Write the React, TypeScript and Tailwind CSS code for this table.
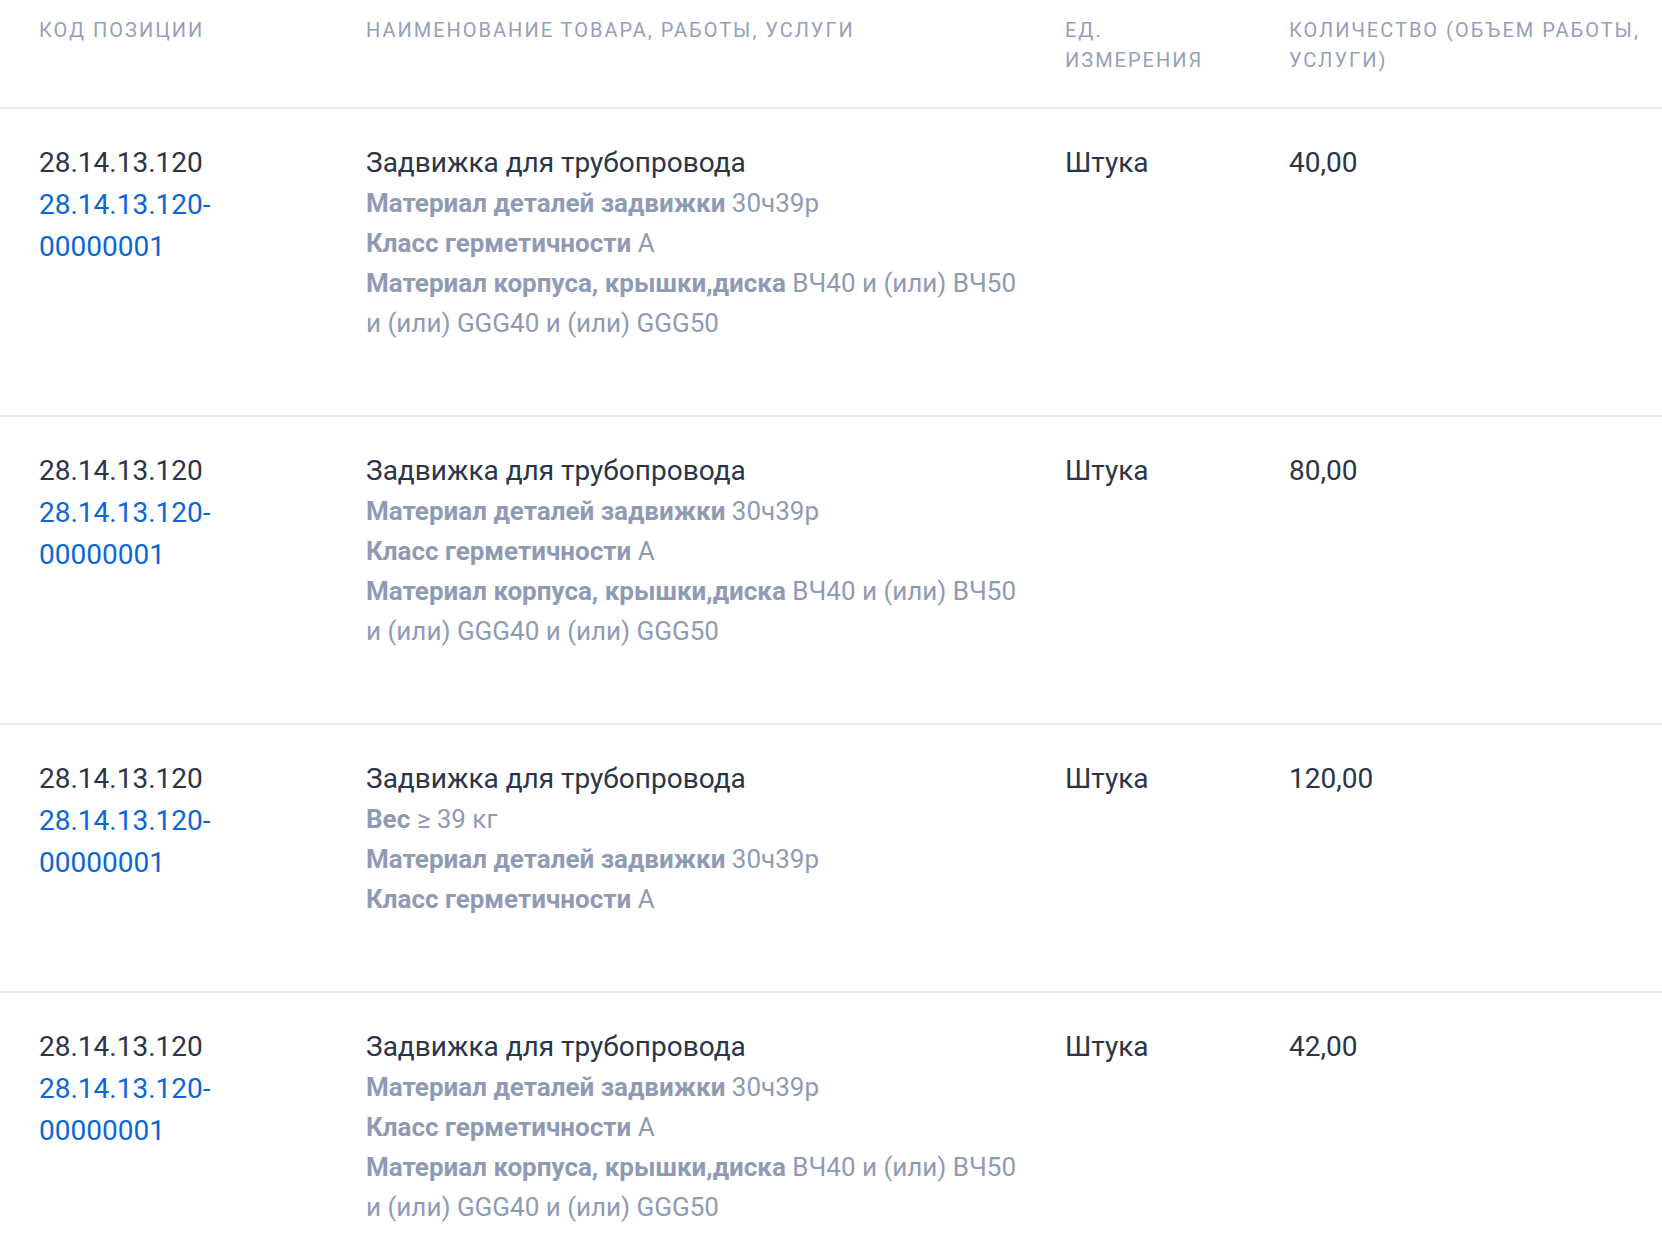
import React from "react";

type Prop = { k: string; v: string };
type Row = { qty: string; props: Prop[] };

const longMat: Prop = {
  k: "Материал корпуса, крышки,диска",
  v: "ВЧ40 и (или) ВЧ50 и (или) GGG40 и (или) GGG50",
};
const mat: Prop = { k: "Материал деталей задвижки", v: "30ч39р" };
const cls: Prop = { k: "Класс герметичности", v: "А" };
const ves: Prop = { k: "Вес", v: "≥ 39 кг" };

const rows: Row[] = [
  { qty: "40,00", props: [mat, cls, longMat] },
  { qty: "80,00", props: [mat, cls, longMat] },
  { qty: "120,00", props: [ves, mat, cls] },
  { qty: "42,00", props: [mat, cls, longMat] },
];

export default function App() {
  return (
    <div
      className="w-full min-h-screen bg-white"
      style={{ fontFamily: "Roboto, 'Noto Sans', sans-serif" }}
    >
      <div className="grid grid-cols-[327px_699px_224px_1fr] pl-[39px] pt-[15px] pb-[32px] border-b-2 border-[#e4e8f1] text-[20px] leading-[30px] tracking-[0.1em] text-[#95a1b9] uppercase">
        <div>Код позиции</div>
        <div>Наименование товара, работы, услуги</div>
        <div className="pr-[60px]">Ед. измерения</div>
        <div className="pr-[10px]">Количество (объем работы, услуги)</div>
      </div>
      {rows.map((r, i) => (
        <div
          key={i}
          className={
            "grid grid-cols-[327px_699px_224px_1fr] pl-[39px] pt-[33px] pb-[72px] text-[28px] leading-[41px] " +
            (i < rows.length - 1 ? "border-b-2 border-[#e4e8f1]" : "")
          }
        >
          <div className="flex flex-col leading-[42px]">
            <span className="text-[#2a3549]">28.14.13.120</span>
            <span className="text-[#0b67d4] pr-[100px]">28.14.13.120-00000001</span>
          </div>
          <div className="pr-[40px]">
            <div className="text-[#2a3549]">Задвижка для трубопровода</div>
            {r.props.map((p, j) => (
              <p key={j} className="text-[26px] leading-[40px] text-[#8f9bb4]">
                <span className="font-bold">{p.k}</span> {p.v}
              </p>
            ))}
          </div>
          <div className="text-[#2a3549]">Штука</div>
          <div className="text-[#2a3549]">{r.qty}</div>
        </div>
      ))}
    </div>
  );
}
